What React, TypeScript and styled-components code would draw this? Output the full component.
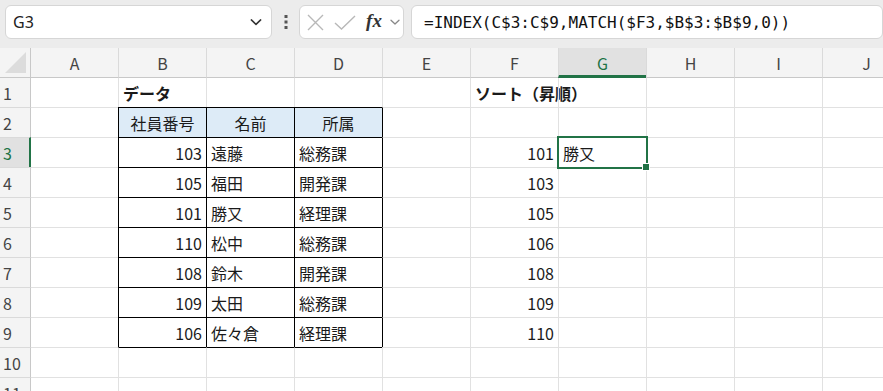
import styled, { createGlobalStyle, css } from "styled-components";

const GlobalStyle = createGlobalStyle`
  html, body {
    margin: 0;
    padding: 0;
    background: #ffffff;
    overflow: hidden;
  }
  * {
    box-sizing: border-box;
  }
`;

const green = "#217346";
const gridLine = "#e1e1e1";
const cellFont = `"Noto Sans CJK JP", "Noto Sans", sans-serif`;

const Page = styled.div`
  width: 883px;
  height: 391px;
  overflow: hidden;
  display: flex;
  flex-direction: column;
`;

const Toolbar = styled.div`
  height: 48px;
  flex: none;
  display: flex;
  align-items: flex-start;
  padding: 5px 0 0 5px;
  background: #ececec;
`;

const Box = styled.div<{ $w?: number }>`
  height: 34px;
  ${({ $w }) => ($w ? `width: ${$w}px;` : "flex: 1;")}
  flex-shrink: 0;
  display: flex;
  align-items: center;
  background: #ffffff;
  border: 1px solid #d6d6d6;
  border-radius: 6px;
`;

const NameText = styled.span`
  flex: 1;
  padding-left: 7px;
  font-family: "Noto Sans", "Liberation Sans", sans-serif;
  font-size: 16px;
  color: #222;
`;

const Kebab = styled.div<{ $w: number }>`
  width: ${({ $w }) => $w}px;
  height: 34px;
  flex: none;
  display: flex;
  align-items: center;
  justify-content: center;
`;

const IconSlot = styled.span<{ $w: number }>`
  width: ${({ $w }) => $w}px;
  display: flex;
  align-items: center;
  justify-content: center;
`;

const Fx = styled.span`
  font-family: "Liberation Serif", "DejaVu Serif", serif;
  font-style: italic;
  font-weight: bold;
  font-size: 19px;
  color: #333;
  margin-top: -2px;
`;

const Formula = styled.span`
  padding-left: 12px;
  font-family: "DejaVu Sans Mono", "Liberation Mono", monospace;
  font-size: 16px;
  color: #111;
  white-space: nowrap;
`;

const Sheet = styled.div`
  display: grid;
  grid-template-columns: 31px 87px repeat(9, 88px);
  grid-template-rows: 30px 29px repeat(10, 30px);
  background: #ffffff;
`;

const Corner = styled.div`
  background: #f4f4f4;
  border-right: 1px solid #c8c8c8;
  border-bottom: 1px solid #c8c8c8;
  position: relative;
  &::after {
    content: "";
    position: absolute;
    right: 4px;
    bottom: 4px;
    width: 0;
    height: 0;
    border-left: 21px solid transparent;
    border-bottom: 21px solid #dcdcdc;
  }
`;

const ColHead = styled.div<{ $active?: boolean; $first?: boolean }>`
  display: flex;
  align-items: center;
  justify-content: center;
  font-family: ${cellFont};
  font-size: 16px;
  color: #444;
  background: #f4f4f4;
  border-left: ${({ $first }) => ($first ? "none" : "1px solid #dadada")};
  border-bottom: 1px solid #c8c8c8;
  ${({ $active }) =>
    $active &&
    css`
      background: #e1e1e1;
      color: ${green};
      border-bottom: 3px solid ${green};
      padding-top: 2px;
    `}
`;

const RowHead = styled.div<{ $active?: boolean }>`
  display: flex;
  align-items: center;
  padding-left: 3px;
  font-family: ${cellFont};
  font-size: 16px;
  color: #444;
  background: #f4f4f4;
  border-right: 1px solid #c8c8c8;
  border-top: 1px solid #dadada;
  &:nth-child(12) {
    border-top: none;
  }
  ${({ $active }) =>
    $active &&
    css`
      background: #e1e1e1;
      color: ${green};
      border-right: 2px solid ${green};
    `}
`;

type Edge = "none" | "grid" | "black";
const edge = (e: Edge) =>
  e === "none" ? "none" : e === "black" ? "1px solid #000" : `1px solid ${gridLine}`;

const Cell = styled.div<{
  $left: Edge;
  $top: Edge;
  $align?: "left" | "right" | "center";
  $bold?: boolean;
  $fill?: string;
}>`
  position: relative;
  display: flex;
  align-items: center;
  justify-content: ${({ $align }) =>
    $align === "right" ? "flex-end" : $align === "center" ? "center" : "flex-start"};
  padding: 0 4px;
  white-space: nowrap;
  font-family: ${cellFont};
  font-size: 16px;
  font-weight: ${({ $bold }) => ($bold ? 700 : 400)};
  color: #1a1a1a;
  background: ${({ $fill }) => $fill || "transparent"};
  border-left: ${({ $left }) => edge($left)};
  border-top: ${({ $top }) => edge($top)};
`;

const Selection = styled.div`
  position: absolute;
  z-index: 3;
  top: -2px;
  left: -2px;
  right: -2px;
  bottom: -2px;
  border: 2px solid ${green};
  pointer-events: none;
  &::after {
    content: "";
    position: absolute;
    right: -4px;
    bottom: -4px;
    width: 6px;
    height: 6px;
    background: ${green};
    border: 1px solid #fff;
  }
`;

const cols = ["A", "B", "C", "D", "E", "F", "G", "H", "I", "J"];

type Val = { text: string; align?: "left" | "right" | "center"; bold?: boolean };

const data: Record<string, Val> = {
  B1: { text: "データ", bold: true },
  F1: { text: "ソート（昇順）", bold: true },
  B2: { text: "社員番号", align: "center" },
  C2: { text: "名前", align: "center" },
  D2: { text: "所属", align: "center" },
};

const rows = [
  ["103", "遠藤", "総務課"],
  ["105", "福田", "開発課"],
  ["101", "勝又", "経理課"],
  ["110", "松中", "総務課"],
  ["108", "鈴木", "開発課"],
  ["109", "太田", "総務課"],
  ["106", "佐々倉", "経理課"],
];
const sorted = ["101", "103", "105", "106", "108", "109", "110"];

rows.forEach((r, i) => {
  const n = i + 3;
  data[`B${n}`] = { text: r[0], align: "right" };
  data[`C${n}`] = { text: r[1] };
  data[`D${n}`] = { text: r[2] };
  data[`F${n}`] = { text: sorted[i], align: "right" };
});
data.G3 = { text: "勝又" };

const inTable = (c: number, r: number) => c >= 1 && c <= 3 && r >= 2 && r <= 9;

function Chevron({ size = 12, color = "#444" }: { size?: number; color?: string }) {
  return (
    <svg width={size} height={size} viewBox="0 0 12 12" fill="none">
      <path d="M2 4.2 L6 8 L10 4.2" stroke={color} strokeWidth="1.3" strokeLinecap="round" strokeLinejoin="round" />
    </svg>
  );
}

export default function App() {
  const rowNums = Array.from({ length: 11 }, (_, i) => i + 1);
  return (
    <Page>
      <GlobalStyle />
      <Toolbar>
        <Box $w={267}>
          <NameText>G3</NameText>
          <IconSlot $w={30}>
            <Chevron size={14} color="#333" />
          </IconSlot>
        </Box>
        <Kebab $w={27}>
          <svg width="4" height="14" viewBox="0 0 4 14">
            <rect x="0.5" y="0" width="3" height="3" fill="#555" />
            <rect x="0.5" y="5.5" width="3" height="3" fill="#555" />
            <rect x="0.5" y="11" width="3" height="3" fill="#555" />
          </svg>
        </Kebab>
        <Box $w={105}>
          <IconSlot $w={30}>
            <svg width="17" height="17" viewBox="0 0 17 17">
              <path d="M1 1 L16 16 M16 1 L1 16" stroke="#b8b8b8" strokeWidth="1.4" />
            </svg>
          </IconSlot>
          <IconSlot $w={30}>
            <svg width="22" height="17" viewBox="0 0 22 17">
              <path d="M1 9 L7.5 15 L21 2" stroke="#b8b8b8" strokeWidth="1.4" fill="none" />
            </svg>
          </IconSlot>
          <IconSlot $w={28}>
            <Fx>fx</Fx>
          </IconSlot>
          <IconSlot $w={14}>
            <Chevron size={12} color="#888" />
          </IconSlot>
        </Box>
        <Kebab $w={7} />
        <Box>
          <Formula>=INDEX(C$3:C$9,MATCH($F3,$B$3:$B$9,0))</Formula>
        </Box>
      </Toolbar>
      <Sheet>
        <Corner />
        {cols.map((c, i) => (
          <ColHead key={c} $first={i === 0} $active={c === "G"}>
            {c}
          </ColHead>
        ))}
        {rowNums.map((r) => [
          <RowHead key={`h${r}`} $active={r === 3}>
            {r}
          </RowHead>,
          ...cols.map((c, ci) => {
            const id = `${c}${r}`;
            const v = data[id];
            const left: Edge =
              ci === 0 ? "none" : inTable(ci, r) || inTable(ci - 1, r) ? "black" : "grid";
            const top: Edge =
              r === 1 ? "none" : inTable(ci, r) || inTable(ci, r - 1) ? "black" : "grid";
            return (
              <Cell
                key={id}
                $left={left}
                $top={top}
                $align={v?.align}
                $bold={v?.bold}
                $fill={r === 2 && inTable(ci, r) ? "#ddebf7" : undefined}
              >
                {v?.text}
                {id === "G3" && <Selection />}
              </Cell>
            );
          }),
        ])}
      </Sheet>
    </Page>
  );
}
